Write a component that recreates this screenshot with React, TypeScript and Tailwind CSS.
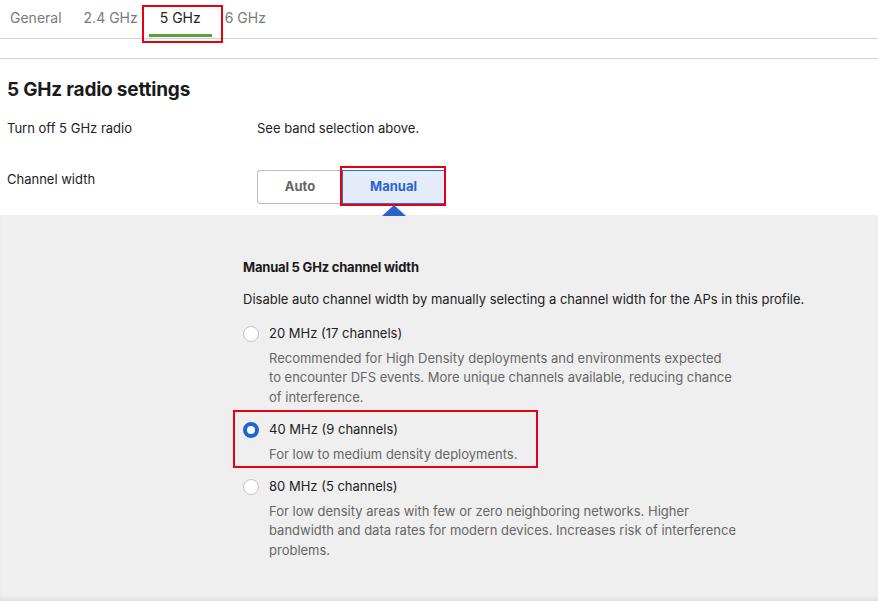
import React from "react";

function Radio({ checked }: { checked?: boolean }) {
  return checked ? (
    <span className="inline-block h-[16px] w-[16px] shrink-0 rounded-full border-[4px] border-[#1f64d4] bg-white" />
  ) : (
    <span className="inline-block h-[16px] w-[16px] shrink-0 rounded-full border border-[#c4c4c4] bg-white" />
  );
}

function Option({
  checked,
  label,
  desc,
  boxed,
}: {
  checked?: boolean;
  label: string;
  desc: React.ReactNode;
  boxed?: boolean;
}) {
  return (
    <div className="relative">
      {boxed && (
        <div className="pointer-events-none absolute left-[-10px] top-[-10px] h-[58px] w-[305px] border-2 border-[#e60012]" />
      )}
      <div className="flex items-center gap-[10px]">
        <Radio checked={checked} />
        <span className="text-[13px] text-[#222]">{label}</span>
      </div>
      <div className="mt-[5px] pl-[26px] text-[13px] leading-[19.5px] text-[#666]">{desc}</div>
    </div>
  );
}

export default function App() {
  return (
    <div
      className="h-[604px] w-[878px] overflow-hidden bg-white"
      style={{ fontFamily: "Inter, Roboto, 'Liberation Sans', sans-serif" }}
    >
      {/* Tabs */}
      <div className="flex h-[39px] border-b border-[#d0d0d0] pl-[10px] text-[14px] text-[#7a7a7a]">
        <div className="relative mr-[22px] pt-[7px]">General</div>
        <div className="relative mr-[22px] pt-[7px]">2.4 GHz</div>
        <div className="relative mr-[24px] pt-[7px] text-[#222]">
          5 GHz
          <div className="absolute left-[-11px] top-[34px] h-[3px] w-[63px] bg-[#55a630]" />
          <div className="pointer-events-none absolute left-[-18px] top-[5px] h-[38px] w-[81px] border-2 border-[#e60012]" />
        </div>
        <div className="relative pt-[7px]">6 GHz</div>
      </div>
      <div className="h-[20px] border-b border-[#d0d0d0]" />

      {/* Settings */}
      <div className="px-[7px] pt-[17px]">
        <h1 className="text-[19px] font-bold tracking-[-0.2px] text-[#1a1a1a]">5 GHz radio settings</h1>
        <div className="mt-[14px] flex text-[13px] text-[#222]">
          <div className="w-[250px]">Turn off 5 GHz radio</div>
          <div>See band selection above.</div>
        </div>
        <div className="mt-[32px] flex text-[13px] text-[#222]">
          <div className="w-[250px]">Channel width</div>
          <div className="relative flex h-[34px]">
            <div className="flex w-[85px] items-center justify-center rounded-l-[3px] border border-r-0 border-[#bdbdbd] text-[13px] font-bold text-[#666]">
              Auto
            </div>
            <div className="flex w-[103px] items-center justify-center border border-[#2f6fd6] bg-[#e4ecfa] text-[13px] font-bold text-[#2a63cf]">
              Manual
            </div>
            <div className="pointer-events-none absolute left-[83px] top-[-4px] h-[40px] w-[106px] border-2 border-[#e60012]" />
            <div className="absolute left-[125px] top-[35px] h-0 w-0 border-x-[12px] border-b-[11px] border-x-transparent border-b-[#2a63cf]" />
          </div>
        </div>
      </div>

      {/* Gray panel */}
      <div className="mt-[11px] h-[386px] bg-[#efefef] pl-[243px] pt-[43px] shadow-[inset_0_-4px_4px_-2px_rgba(0,0,0,0.08)]">
        <div className="text-[13px] font-bold tracking-[-0.2px] text-[#1a1a1a]">Manual 5 GHz channel width</div>
        <div className="mt-[12px] text-[13px] text-[#222]">
          Disable auto channel width by manually selecting a channel width for the APs in this profile.
        </div>
        <div className="mt-[15px] flex flex-col gap-[13px]">
          <Option
            label="20 MHz (17 channels)"
            desc={
              <>
                Recommended for High Density deployments and environments expected
                <br />
                to encounter DFS events. More unique channels available, reducing chance
                <br />
                of interference.
              </>
            }
          />
          <Option checked boxed label="40 MHz (9 channels)" desc="For low to medium density deployments." />
          <Option
            label="80 MHz (5 channels)"
            desc={
              <>
                For low density areas with few or zero neighboring networks. Higher
                <br />
                bandwidth and data rates for modern devices. Increases risk of interference
                <br />
                problems.
              </>
            }
          />
        </div>
      </div>
    </div>
  );
}
